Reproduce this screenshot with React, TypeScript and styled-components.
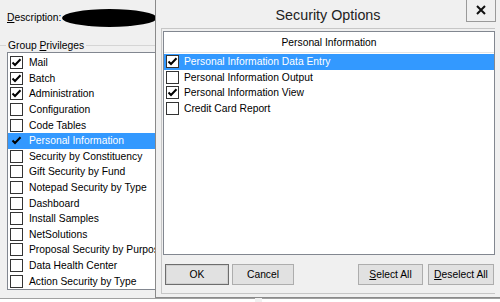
import styled, { createGlobalStyle } from "styled-components";

const GlobalStyle = createGlobalStyle`
  body {
    margin: 0;
    background: #f0f0f0;
    font-family: "Liberation Sans", Arial, sans-serif;
  }
`;

const Screen = styled.div`
  position: relative;
  width: 500px;
  height: 302px;
  overflow: hidden;
  background: #f0f0f0;
  font-size: 10.3px;
  color: #000;
`;

const MainColumn = styled.div`
  display: flex;
  flex-direction: column;
  width: 500px;
  height: 302px;
`;

const DescriptionRow = styled.div`
  display: flex;
  align-items: center;
  height: 34px;
  padding: 0 7px;
  gap: 1px;
`;

const Redacted = styled.div`
  width: 95px;
  height: 18px;
  margin-top: 1px;
  background: #000;
  border-radius: 50%;
`;

const GroupHeader = styled.div`
  display: flex;
  align-items: center;
  height: 14px;
  margin-top: 4px;
  gap: 2px;
`;

const GroupLine = styled.div<{ $w?: number }>`
  height: 1px;
  background: #d5d5d5;
  width: ${(p) => (p.$w ? `${p.$w}px` : "auto")};
  flex: ${(p) => (p.$w ? "none" : "1")};
`;

const ListBox = styled.div`
  margin-left: 7px;
  width: 170px;
  height: 234px;
  background: #fff;
  border: 1px solid #828790;
  padding-top: 2px;
  box-sizing: content-box;
  display: flex;
  flex-direction: column;
`;

const Row = styled.div<{ $selected?: boolean; $pad?: number }>`
  display: flex;
  align-items: center;
  height: 15.6px;
  flex: none;
  padding-left: ${(p) => p.$pad ?? 2}px;
  gap: 6px;
  white-space: nowrap;
  background: ${(p) => (p.$selected ? "#3399ff" : "transparent")};
  color: ${(p) => (p.$selected ? "#fff" : "#000")};
`;

const Box = styled.span<{ $plain?: boolean }>`
  width: 13px;
  height: 13px;
  flex: none;
  box-sizing: border-box;
  border: 1px solid ${(p) => (p.$plain ? "transparent" : "#333")};
  background: ${(p) => (p.$plain ? "transparent" : "#fff")};
  display: flex;
  align-items: center;
  justify-content: center;
`;

const Footer = styled.div`
  display: flex;
  margin-top: 8px;
  gap: 7px;
  flex: 1;
`;

const FooterPanel = styled.div<{ $w?: number }>`
  background: #fff;
  border-top: 1px solid #a0a0a0;
  width: ${(p) => (p.$w ? `${p.$w}px` : "auto")};
  flex: ${(p) => (p.$w ? "none" : "1")};
`;

const Dialog = styled.div`
  position: absolute;
  left: 155px;
  top: -8px;
  width: 345px;
  height: 306px;
  box-sizing: border-box;
  background: #f0f0f0;
  border-left: 1px solid #8a8a8a;
  border-bottom: 1px solid #8a8a8a;
  padding: 0 5px 3px 5px;
  display: flex;
  flex-direction: column;
`;

const TitleBar = styled.div`
  position: relative;
  height: 36px;
  flex: none;
  box-sizing: border-box;
  padding-top: 10px;
  display: flex;
  align-items: center;
  justify-content: center;
`;

const Title = styled.span`
  font-size: 14.3px;
  color: #222;
`;

const CloseButton = styled.div`
  position: absolute;
  right: -1px;
  top: -1px;
  width: 30px;
  height: 31px;
  box-sizing: border-box;
  border: 1px solid #9a9a9a;
  border-top: none;
  display: flex;
  align-items: center;
  justify-content: center;
  padding-top: 7px;
`;

const ClientPanel = styled.div`
  flex: 1;
  display: flex;
  flex-direction: column;
  border: 1px solid #c6c6c6;
  border-right: none;
  padding: 2px 0 0 1px;
`;

const OptionList = styled.div`
  height: 224px;
  box-sizing: border-box;
  background: #fff;
  border: 1px solid #828790;
  display: flex;
  flex-direction: column;
`;

const ListHeader = styled.div`
  height: 21px;
  flex: none;
  box-sizing: border-box;
  border-bottom: 1px solid #e5e5e5;
  display: flex;
  align-items: center;
  justify-content: center;
  margin-bottom: 1px;
`;

const ButtonRow = styled.div`
  flex: 1;
  display: flex;
  align-items: center;
  padding: 0 1px 0 2px;
  gap: 3px;
`;

const Spacer = styled.div`
  flex: 1;
`;

const Button = styled.div<{ $w: number; $default?: boolean; $gap?: number }>`
  width: ${(p) => p.$w}px;
  height: 21px;
  box-sizing: border-box;
  margin-left: ${(p) => p.$gap ?? 0}px;
  background: #e1e1e1;
  border: 1px solid ${(p) => (p.$default ? "#6d6d6d" : "#adadad")};
  box-shadow: ${(p) => (p.$default ? "inset 0 0 0 1px #d0d0d0" : "none")};
  display: flex;
  align-items: center;
  justify-content: center;
`;

function Check() {
  return (
    <svg width="11" height="11" viewBox="0 0 11 11">
      <path d="M1.5 5.5 L4 8 L9.5 2.2" fill="none" stroke="#000" strokeWidth="2" />
    </svg>
  );
}

const privileges: [string, boolean][] = [
  ["Mail", true],
  ["Batch", true],
  ["Administration", true],
  ["Configuration", false],
  ["Code Tables", false],
  ["Personal Information", true],
  ["Security by Constituency", false],
  ["Gift Security by Fund", false],
  ["Notepad Security by Type", false],
  ["Dashboard", false],
  ["Install Samples", false],
  ["NetSolutions", false],
  ["Proposal Security by Purpose", false],
  ["Data Health Center", false],
  ["Action Security by Type", false],
];

const options: [string, boolean][] = [
  ["Personal Information Data Entry", true],
  ["Personal Information Output", false],
  ["Personal Information View", true],
  ["Credit Card Report", false],
];

export default function App() {
  return (
    <Screen>
      <GlobalStyle />
      <MainColumn>
        <DescriptionRow>
          <span>
            <u>D</u>escription:
          </span>
          <Redacted />
        </DescriptionRow>
        <GroupHeader>
          <GroupLine $w={6} />
          <span>
            Group <u>P</u>rivileges
          </span>
          <GroupLine />
        </GroupHeader>
        <ListBox>
          {privileges.map(([name, checked]) => {
            const selected = name === "Personal Information";
            return (
              <Row key={name} $selected={selected}>
                <Box $plain={selected}>{checked && <Check />}</Box>
                {name}
              </Row>
            );
          })}
        </ListBox>
        <Footer>
          <FooterPanel $w={255} />
          <FooterPanel />
        </Footer>
      </MainColumn>

      <Dialog>
        <TitleBar>
          <Title>Security Options</Title>
          <CloseButton>
            <svg width="10" height="10" viewBox="0 0 10 10">
              <path d="M1 1 L9 9 M9 1 L1 9" stroke="#111" strokeWidth="2" />
            </svg>
          </CloseButton>
        </TitleBar>
        <ClientPanel>
          <OptionList>
            <ListHeader>Personal Information</ListHeader>
            {options.map(([name, checked], i) => (
              <Row key={name} $selected={i === 0} style={{ gap: 5 }}>
                <Box>{checked && <Check />}</Box>
                {name}
              </Row>
            ))}
          </OptionList>
          <ButtonRow>
            <Button $w={64} $default>
              OK
            </Button>
            <Button $w={62}>Cancel</Button>
            <Spacer />
            <Button $w={65}>
              <u>S</u>elect All
            </Button>
            <Button $w={66} $gap={2}>
              <u>D</u>eselect All
            </Button>
          </ButtonRow>
        </ClientPanel>
      </Dialog>
    </Screen>
  );
}
